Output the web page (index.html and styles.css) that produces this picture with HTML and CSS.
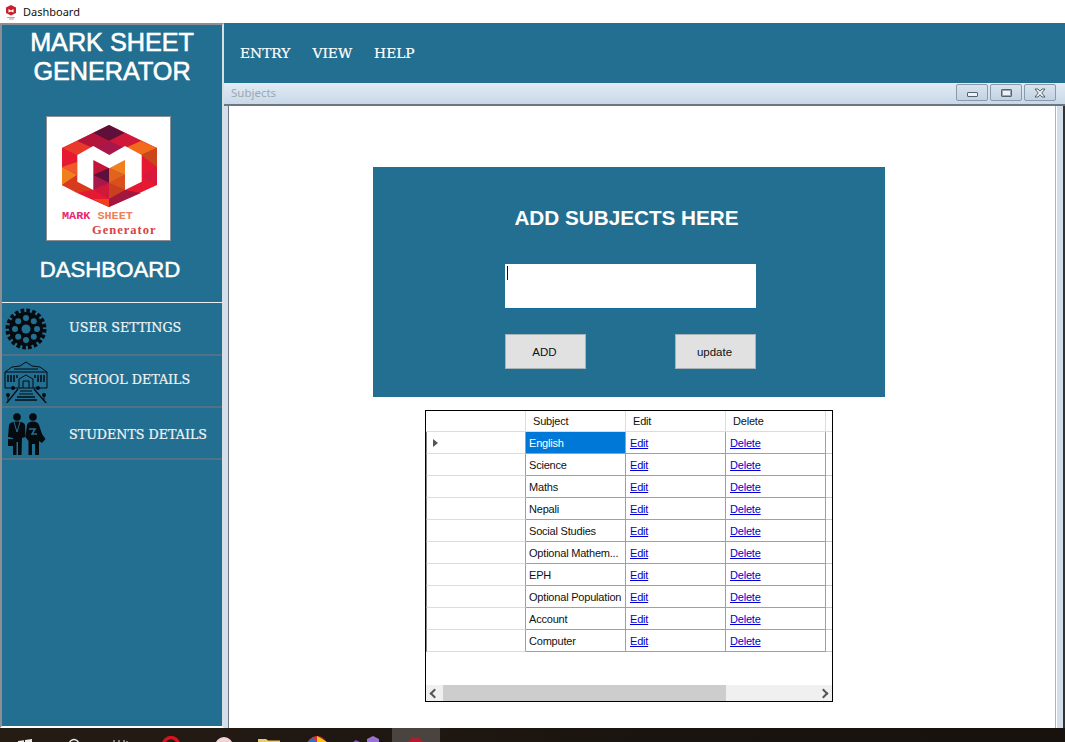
FILE: index.html
```html
<!DOCTYPE HTML>
<html>
<head>
<meta charset="utf-8">
<title>Dashboard</title>
<link rel="stylesheet" href="styles.css">
</head>
<body>
	<div class="titlebar">
		<svg class="appicon" width="16" height="16" viewBox="0 0 16 16">
			<polygon points="8,1 13,3.500 13,9 8,11.500 3,9 3,3.500" fill="#c8202c"/>
			<polygon points="5.500,5 8,6.500 10.500,5 10.500,8.500 8,7.500 5.500,8.500" fill="#fff"/>
			<rect x="4" y="13" width="8" height="1" fill="#d99"/>
			<rect x="6" y="14.500" width="5" height="1" fill="#d88"/>
		</svg>
		<span>Dashboard</span>
	</div>

	<div class="app">
		<div class="sidebar">
			<h1 class="brand">MARK SHEET<br>GENERATOR</h1>
			<div class="logo">
				<svg width="123" height="94" viewBox="0 0 123 94">
					<polygon points="62,8 110,31 110,68 62,90 15,68 15,31" fill="#e51a32"/>
					<polygon points="62,8 46,16 62,24 78,16" fill="#5e0f3a"/>
					<polygon points="78,16 62,24 78,31 94,24" fill="#d0183a"/>
					<polygon points="46,16 30,24 46,31 62,24" fill="#b3153a"/>
					<polygon points="94,24 78,31 94,38 110,31" fill="#f26a1c"/>
					<polygon points="30,24 15,31 30,38 46,31" fill="#e8392a"/>
					<polygon points="62,24 46,31 62,38 78,31" fill="#a8174a"/>
					<polygon points="110,31 94,38 110,50" fill="#c9471a"/>
					<polygon points="15,50 30,58 15,68" fill="#f0801e"/>
					<polygon points="15,50 30,45 30,58" fill="#f0592a"/>
					<polygon points="15,68 30,58 46,73 30,76" fill="#d93a1e"/>
					<polygon points="110,50 95,58 110,68" fill="#d8183c"/>
					<polygon points="62,51 46,43 46,58" fill="#c4143a"/>
					<polygon points="62,51 78,43 78,58" fill="#f0801e"/>
					<polygon points="62,51 46,58 62,66" fill="#5e0f3a"/>
					<polygon points="62,51 78,58 62,66" fill="#e0641c"/>
					<polygon points="46,58 62,66 46,73" fill="#a8174a"/>
					<polygon points="78,58 62,66 78,73" fill="#d9501c"/>
					<polygon points="46,73 62,66 62,82" fill="#d0183a"/>
					<polygon points="62,66 78,73 62,82" fill="#c9401e"/>
					<polygon points="46,73 62,82 62,90 30,76" fill="#e51a32"/>
					<polygon points="62,82 78,73 94,76 62,90" fill="#a3173f"/>
					<polygon points="46,82 62,82 62,90" fill="#f0401e"/>
					<polygon points="30.3,38 46.3,29 62.3,38 78,29 94.7,38 94.7,64.7 78,73 78,43 62.3,51.3 46.3,43 46.3,73 30.3,64.7" fill="#fff"/>
				</svg>
				<div class="logo-mark"><span class="logo-pink">MARK</span> <span class="logo-orange">SHEET</span></div>
				<div class="logo-gen">Generator</div>
			</div>
			<h2 class="dash">DASHBOARD</h2>
			<div class="navlist">
				<div class="navitem">
					<svg class="navicon" width="44" height="44" viewBox="0 0 44 44">
						<circle cx="22" cy="22" r="18.500" fill="none" stroke="#060b10" stroke-width="4" stroke-dasharray="3.600 2.200"/>
						<circle cx="22" cy="22" r="17" fill="#060b10"/>
						<g fill="#236f91">
							<circle cx="22" cy="22" r="4.500"/>
							<circle cx="22" cy="11" r="3"/>
							<circle cx="29.800" cy="14.200" r="3"/>
							<circle cx="33" cy="22" r="3"/>
							<circle cx="29.800" cy="29.800" r="3"/>
							<circle cx="22" cy="33" r="3"/>
							<circle cx="14.200" cy="29.800" r="3"/>
							<circle cx="11" cy="22" r="3"/>
							<circle cx="14.200" cy="14.200" r="3"/>
						</g>
					</svg>
					<span class="navlabel">USER SETTINGS</span>
				</div>
				<div class="navitem">
					<svg class="navicon" width="44" height="44" viewBox="0 0 44 44">
						<g fill="none" stroke="#060b10" stroke-width="1">
							<path d="M1 13 L8 8 L16 7 L22 3 L28 7 L36 8 L43 13 V29 H1 Z"/>
							<path d="M1 13 H43 M10 10 H34"/>
							<path d="M15 29 V20 L22 16 L29 20 V29 M19 29 V22 H25 V29"/>
							<path d="M14 30 L2 45 M30 30 L43 45 M13 38 H31 M11 41 H33" stroke-width="1.300"/>
							<path d="M16 32 H28 M15 35 H29" stroke-width="1"/>
							<path d="M4 16 V23 M7 16 V23 M10 16 V23 M13 16 V19 M31 16 V19 M34 16 V23 M37 16 V23 M40 16 V23" stroke-width="1.500"/>
						</g>
						<circle cx="9" cy="29" r="2" fill="#060b10"/>
						<circle cx="34" cy="29" r="2" fill="#060b10"/>
						<circle cx="4" cy="36" r="2" fill="#060b10"/>
						<circle cx="40" cy="36" r="2" fill="#060b10"/>
						<path d="M4 36 V42 M40 36 V42" stroke="#060b10"/>
					</svg>
					<span class="navlabel">SCHOOL DETAILS</span>
				</div>
				<div class="navitem navitem-low">
					<svg class="navicon" width="44" height="44" viewBox="0 0 44 44">
						<g fill="#060b10">
							<circle cx="13" cy="6" r="3.800"/>
							<circle cx="29" cy="6" r="3.800"/>
							<path d="M5 14 Q6 10.500 13 10.500 Q20 10.500 21 14 L21.500 26 L18 27 L17.500 44 H14 V31 H12.500 V44 H9 V27 L4 26 Z"/>
							<path d="M23 14 Q24 10.500 29 10.500 Q34 10.500 35 14 L38 23 L41.500 28 L38 32 L35 30 L35 44 H31 V33 H28 V44 H24.500 V30 L21.500 26 Z"/>
							<rect x="4" y="28" width="6" height="7"/>
						</g>
						<path d="M25 18 H31 L28 23 H33" fill="none" stroke="#236f91" stroke-width="1.500"/>
						<path d="M10 11 L13 21 L16 11" fill="none" stroke="#236f91" stroke-width="1"/>
					</svg>
					<span class="navlabel">STUDENTS DETAILS</span>
				</div>
			</div>
		</div>

		<div class="workarea">
			<div class="menubar">
				<span class="menuitem">ENTRY</span>
				<span class="menuitem">VIEW</span>
				<span class="menuitem">HELP</span>
			</div>
			<div class="child">
				<div class="childbar">
					<span class="childtitle">Subjects</span>
					<div class="capbtns">
						<div class="capbtn"><span class="cap-min"></span></div>
						<div class="capbtn"><span class="cap-max"></span></div>
						<div class="capbtn">
							<svg width="14" height="10" viewBox="0 0 14 10">
								<path d="M2 1 H5 L7 3.200 L9 1 H12 L8.800 5 L12 9 H9 L7 6.800 L5 9 H2 L5.200 5 Z" fill="#eef2f6" stroke="#56626e" stroke-width="1"/>
							</svg>
						</div>
					</div>
				</div>
				<div class="childmain">
					<div class="childbody">
						<div class="panel">
							<h3 class="paneltitle">ADD SUBJECTS HERE</h3>
							<div class="inputbox"><span class="caret"></span></div>
							<div class="panelbtns">
								<div class="btn">ADD</div>
								<div class="btn">update</div>
							</div>
						</div>
						<div class="grid">
							<table class="gridtable">
								<tr class="headrow"><th class="rowhead"></th><th>Subject</th><th>Edit</th><th>Delete</th><th class="fill"></th></tr>
								<tr><td class="rowhead"><span class="arrow"></span></td><td class="sel">English</td><td><a href="#">Edit</a></td><td><a href="#">Delete</a></td><td class="fill"></td></tr>
								<tr><td class="rowhead"></td><td>Science</td><td><a href="#">Edit</a></td><td><a href="#">Delete</a></td><td class="fill"></td></tr>
								<tr><td class="rowhead"></td><td>Maths</td><td><a href="#">Edit</a></td><td><a href="#">Delete</a></td><td class="fill"></td></tr>
								<tr><td class="rowhead"></td><td>Nepali</td><td><a href="#">Edit</a></td><td><a href="#">Delete</a></td><td class="fill"></td></tr>
								<tr><td class="rowhead"></td><td>Social Studies</td><td><a href="#">Edit</a></td><td><a href="#">Delete</a></td><td class="fill"></td></tr>
								<tr><td class="rowhead"></td><td>Optional Mathem...</td><td><a href="#">Edit</a></td><td><a href="#">Delete</a></td><td class="fill"></td></tr>
								<tr><td class="rowhead"></td><td>EPH</td><td><a href="#">Edit</a></td><td><a href="#">Delete</a></td><td class="fill"></td></tr>
								<tr><td class="rowhead"></td><td>Optional Population</td><td><a href="#">Edit</a></td><td><a href="#">Delete</a></td><td class="fill"></td></tr>
								<tr><td class="rowhead"></td><td>Account</td><td><a href="#">Edit</a></td><td><a href="#">Delete</a></td><td class="fill"></td></tr>
								<tr><td class="rowhead"></td><td>Computer</td><td><a href="#">Edit</a></td><td><a href="#">Delete</a></td><td class="fill"></td></tr>
							</table>
							<div class="hscroll">
								<span class="sarrow sarrow-l"></span>
								<div class="strack"><div class="sthumb"></div></div>
								<span class="sarrow sarrow-r"></span>
							</div>
						</div>
					</div>
				</div>
			</div>
		</div>
	</div>

	<div class="taskbar">
		<svg width="1065" height="14" viewBox="0 0 1065 14">
			<rect x="392" y="0" width="48" height="14" fill="#4a4440"/>
			<path d="M18 13 L24 12.200 V14 H18 Z M25 12 L32 11 V14 H25 Z" fill="#eee"/>
			<circle cx="74" cy="16" r="4.500" fill="none" stroke="#eee" stroke-width="1.500"/>
			<path d="M114 12 V14 M119 12 V14 M124 12 V14 M127 13 V14" stroke="#ddd" stroke-width="1"/>
			<circle cx="171" cy="17" r="7.500" fill="none" stroke="#d8121e" stroke-width="3.500"/>
			<circle cx="224" cy="18" r="9" fill="#f2d4d4"/>
			<circle cx="224" cy="19" r="5" fill="#c8202c"/>
			<path d="M258 11 H266 L268 12.500 H280 V14 H258 Z" fill="#eccb6e"/>
			<circle cx="317" cy="18" r="10" fill="#d8352c"/>
			<path d="M317 8 L327 14 L317 14 Z" fill="#f6c915"/>
			<path d="M307 14 L313 10 L317 14 Z" fill="#2a6fd6"/>
			<path d="M373 8 L379 11 V14 H367 V11 Z" fill="#9a72cf"/>
			<path d="M353 14 L356 12 L360 14 Z" fill="#7a4fc0"/>
			<circle cx="415.500" cy="17" r="8" fill="#b01c2a"/>
		</svg>
	</div>
</body>
</html>
```

FILE: styles.css
```css
*{
	margin: 0;
	padding: 0;
	box-sizing: border-box;
}

body{
	width: 1065px;
	height: 742px;
	overflow: hidden;
	background-color: #fff;
	font-family: "Liberation Sans", sans-serif;
}

.titlebar{
	height: 23px;
	display: flex;
	align-items: center;
	padding-left: 3px;
	gap: 4px;
	background-color: #fff;
	font-family: "Noto Sans", sans-serif;
	font-size: 11px;
	color: #111;
}

.app{
	height: 705px;
	display: flex;
}

/* left column */
.sidebar{
	width: 224px;
	height: 705px;
	background-color: #236f91;
	border: 2px solid #8a8f94;
	border-right-color: #d8dfe6;
	border-bottom: 2px solid #fff;
	color: #fff;
}
.brand{
	height: 91px;
	padding-top: 3px;
	font-size: 25.2px;
	line-height: 29px;
	font-weight: normal;
	-webkit-text-stroke: 0.6px #fff;
	text-align: center;
}
.logo{
	width: 125px;
	height: 125px;
	margin-left: 44px;
	background-color: #fff;
	border: 1px solid #8a8f94;
	display: flex;
	flex-direction: column;
	overflow: hidden;
}
.logo svg{
	flex: none;
}
.logo-mark{
	margin-left: 15px;
	margin-top: 1px;
	font-family: "Liberation Mono", monospace;
	font-size: 11.8px;
	font-weight: bold;
	line-height: 9px;
}
.logo-pink{
	color: #e8286e;
}
.logo-orange{
	color: #ee8158;
}
.logo-gen{
	margin-left: 45px;
	margin-top: 3px;
	font-family: "Liberation Serif", serif;
	font-size: 12.5px;
	font-weight: bold;
	letter-spacing: 1px;
	line-height: 12px;
	color: #d8433f;
}
.dash{
	height: 61px;
	padding-top: 16px;
	padding-right: 4px;
	font-size: 22.2px;
	line-height: 26px;
	font-weight: normal;
	-webkit-text-stroke: 0.5px #fff;
	text-align: center;
}
.navlist{
	border-top: 1px solid #e8eef2;
	padding-top: 1px;
}
.navitem{
	height: 52px;
	display: flex;
	align-items: center;
	padding-left: 2px;
	border-bottom: 2px solid #4f7285;
}
.navicon{
	flex: none;
}
.navlabel{
	margin-left: 21px;
	font-family: "DejaVu Serif", serif;
	font-size: 12.7px;
	-webkit-text-stroke: 0.2px #f0f4f6;
	color: #f0f4f6;
	white-space: nowrap;
	padding-bottom: 4px;
}
.navitem-low .navlabel{
	padding-bottom: 0;
	padding-top: 2px;
}

/* right column */
.workarea{
	width: 841px;
	height: 705px;
	display: flex;
	flex-direction: column;
}
.menubar{
	height: 60px;
	flex: none;
	display: flex;
	align-items: center;
	gap: 22px;
	padding-left: 16px;
	padding-bottom: 1px;
	background-color: #236f91;
}
.menuitem{
	font-family: "DejaVu Serif", serif;
	font-size: 13.8px;
	-webkit-text-stroke: 0.2px #fff;
	color: #fff;
}
.child{
	flex: 1;
	display: flex;
	flex-direction: column;
}
.childbar{
	height: 23px;
	flex: none;
	padding: 1px 9px 0 7px;
	display: flex;
	justify-content: space-between;
	background: linear-gradient(#e2ebf4, #c9d8e8);
	border-bottom: 2px solid #6d7780;
}
.childtitle{
	font-family: "Noto Sans", sans-serif;
	font-size: 11.5px;
	line-height: 18px;
	color: #9ba8b4;
}
.capbtns{
	display: flex;
	gap: 2px;
}
.capbtn{
	width: 32px;
	height: 17px;
	display: flex;
	align-items: center;
	justify-content: center;
	border: 1px solid #8b9aa8;
	border-radius: 2px;
	background: linear-gradient(#d8e3ee, #c3d2e2);
}
.cap-min{
	width: 11px;
	height: 5px;
	margin-top: 3px;
	background-color: #eef2f6;
	border: 1px solid #56626e;
	border-radius: 1px;
}
.cap-max{
	width: 11px;
	height: 8px;
	background-color: #eef2f6;
	border: 1px solid #56626e;
	border-radius: 1px;
	box-shadow: inset 0 0 0 1px #9aa6b2;
}
.childmain{
	flex: 1;
	display: flex;
	background-color: #d3dfeb;
	padding: 0 7px 0 4px;
	border-right: 2px solid #333;
}
.childbody{
	flex: 1;
	background-color: #fff;
	border-left: 1px solid #6d7780;
	border-right: 1px solid #aab4be;
	box-shadow: 1px 0 0 #fff;
	padding-top: 61px;
	padding-left: 144px;
}
.panel{
	width: 512px;
	height: 230px;
	background-color: #236f91;
	padding-left: 132px;
	padding-top: 38px;
	color: #fff;
}
.paneltitle{
	width: 243px;
	font-size: 20.7px;
	line-height: 25px;
	font-weight: bold;
	white-space: nowrap;
	text-align: center;
}
.inputbox{
	width: 251px;
	height: 44px;
	margin-top: 34px;
	padding: 2px 0 0 2px;
	background-color: #fff;
	box-shadow: 0 1px 0 #146a9c;
}
.caret{
	display: block;
	width: 1px;
	height: 14px;
	background-color: #111;
}
.panelbtns{
	width: 251px;
	margin-top: 26px;
	display: flex;
	justify-content: space-between;
}
.btn{
	width: 81px;
	height: 35px;
	padding-right: 2px;
	background-color: #e1e1e1;
	border: 1px solid #a9b4ba;
	font-size: 11.5px;
	line-height: 34px;
	color: #111;
	text-align: center;
}

/* data grid */
.grid{
	width: 408px;
	height: 292px;
	margin-top: 13px;
	margin-left: 52px;
	border: 1px solid #000;
	background-color: #fff;
	display: flex;
	flex-direction: column;
	justify-content: space-between;
}
.gridtable{
	border-collapse: separate;
	border-spacing: 0;
	table-layout: fixed;
	width: 406px;
	font-size: 11px;
	letter-spacing: -0.2px;
	color: #111;
}
.gridtable th{
	width: 100px;
	height: 21px;
	padding-left: 7px;
	font-weight: normal;
	text-align: left;
	border-right: 1px solid #dcdcdc;
	border-bottom: 1px solid #dcdcdc;
}
.gridtable td{
	width: 100px;
	height: 22px;
	padding-left: 3px;
	white-space: nowrap;
	overflow: hidden;
	border-right: 1px solid #a0a0a0;
	border-bottom: 1px solid #a0a0a0;
}
.gridtable td a{
	margin-left: 1px;
}
.gridtable td.rowhead{
	padding-left: 6px;
	border-left: 1px solid #808080;
	border-bottom: 1px solid #dcdcdc;
}
.gridtable .fill{
	width: 6px;
	border-right: 0;
	padding: 0;
}
.gridtable td.fill{
	border-bottom: 1px solid #c8c8c8;
}
.gridtable td.sel{
	background-color: #0078d7;
	color: #fff;
}
.gridtable a{
	color: #0000d0;
}
.arrow{
	display: block;
	width: 0;
	height: 0;
	border-left: 5px solid #555;
	border-top: 4px solid transparent;
	border-bottom: 4px solid transparent;
}
.hscroll{
	height: 16px;
	display: flex;
	align-items: center;
	background-color: #f0f0f0;
}
.sarrow{
	flex: none;
	width: 17px;
	height: 16px;
	display: flex;
	align-items: center;
	justify-content: center;
}
.sarrow::after{
	content: "";
	width: 5px;
	height: 5px;
	border-left: 2px solid #555;
	border-bottom: 2px solid #555;
}
.sarrow-l::after{
	transform: rotate(45deg);
}
.sarrow-r::after{
	transform: rotate(225deg);
}
.strack{
	flex: 1;
	height: 16px;
}
.sthumb{
	width: 283px;
	height: 16px;
	background-color: #cdcdcd;
}

.taskbar{
	height: 14px;
	background: linear-gradient(90deg, #251c14, #1a1410 60%, #17120e);
	overflow: hidden;
}
.taskbar svg{
	display: block;
}
```
